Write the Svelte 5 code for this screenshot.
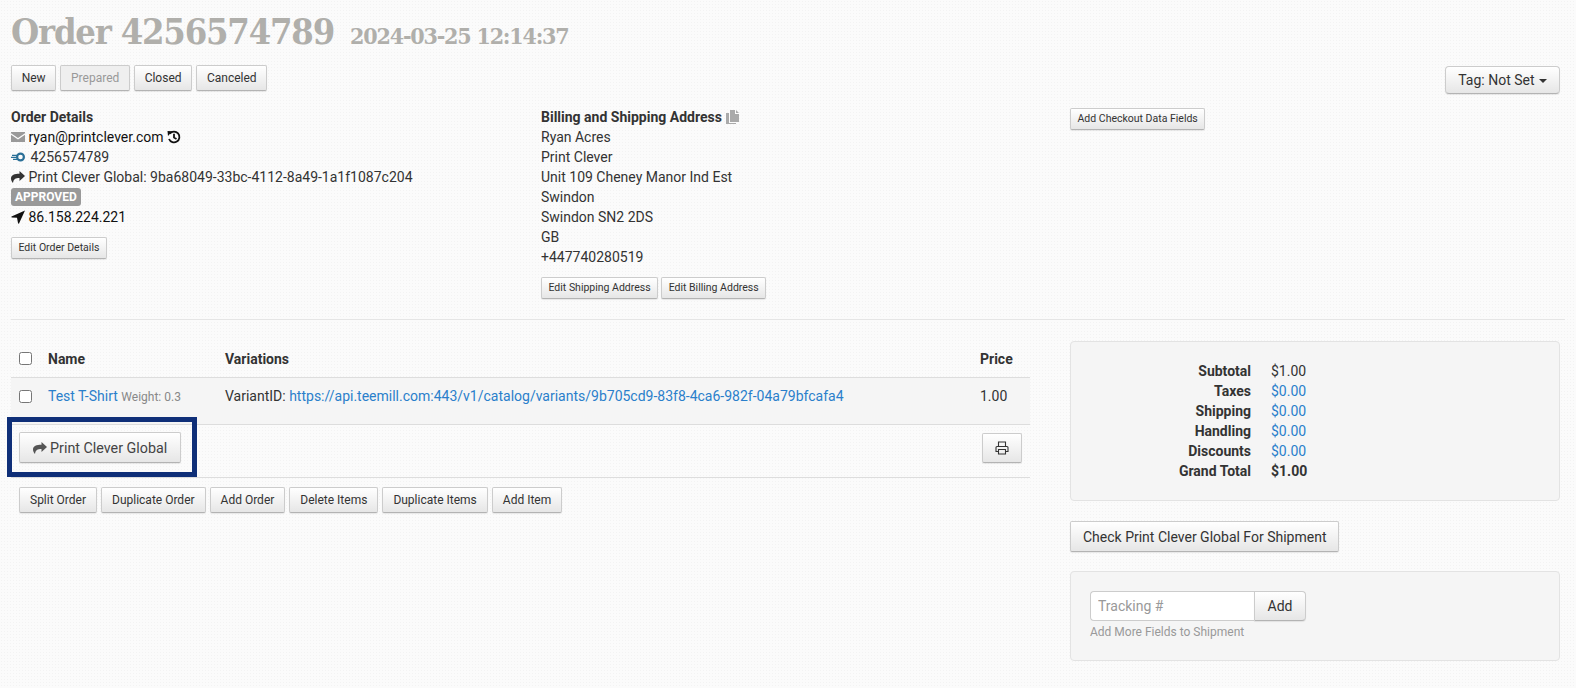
<script>
	let statuses = [
		{ label: 'New' },
		{ label: 'Prepared', disabled: true },
		{ label: 'Closed' },
		{ label: 'Canceled' }
	];
	let addressLines = ['Ryan Acres', 'Print Clever', 'Unit 109 Cheney Manor Ind Est', 'Swindon', 'Swindon SN2 2DS', 'GB', '+447740280519'];
	let actions = ['Split Order', 'Duplicate Order', 'Add Order', 'Delete Items', 'Duplicate Items', 'Add Item'];
	let totals = [
		{ label: 'Subtotal', value: '$1.00' },
		{ label: 'Taxes', value: '$0.00', link: true },
		{ label: 'Shipping', value: '$0.00', link: true },
		{ label: 'Handling', value: '$0.00', link: true },
		{ label: 'Discounts', value: '$0.00', link: true },
		{ label: 'Grand Total', value: '$1.00', bold: true }
	];
</script>

<div class="page">
	<h1>Order 4256574789 <small>2024-03-25 12:14:37</small></h1>

	<div class="toolbar">
		<div class="btns">
			{#each statuses as s}
				<button class="btn status" disabled={s.disabled}>{s.label}</button>
			{/each}
		</div>
		<button class="btn tag">Tag: Not Set <span class="caret"></span></button>
	</div>

	<div class="details">
		<div class="col">
			<strong>Order Details</strong>
			<div class="line">
				<svg class="ic" width="14" height="14" viewBox="0 0 14 14"><path fill="#999" d="M0 2h14v1.200L7 8 0 3.200zM0 4.800l7 4.700 7-4.700V12H0z"/></svg>
				<span class="dark">ryan@printclever.com</span>
				<svg width="14" height="14" viewBox="0 0 14 14" class="hist"><path fill="none" stroke="#111" stroke-width="1.800" d="M2.800 3.600A5.400 5.400 0 1 1 2 9M7 3.800v3.700l2.500 1.500"/><path fill="#111" d="M.5 1l4.800 .3L1 6z"/></svg>
			</div>
			<div class="line">
				<svg class="ic" width="14" height="14" viewBox="0 0 14 14"><circle cx="9.500" cy="7" r="3.400" fill="none" stroke="#2a6f97" stroke-width="2.200"/><path stroke="#2a6f97" stroke-width="1.200" d="M1 5.300h5M0 7.300h6M2 9.300h4"/></svg>
				<span class="gap">4256574789</span>
			</div>
			<div class="line">
				<svg class="ic" width="14" height="14" viewBox="0 0 14 14"><path fill="#333" d="M8.500 1L14 6 8.500 11V8C4.500 8 2.500 9 2 13 .7 11.500 0 10 0 8.500 0 5 3.500 3.800 8.500 3.800z"/></svg>
				Print Clever Global: 9ba68049-33bc-4112-8a49-1a1f1087c204
			</div>
			<div class="line"><span class="badge">APPROVED</span></div>
			<div class="line">
				<svg class="ic" width="14" height="14" viewBox="0 0 14 14"><path fill="#111" d="M14 .5L8 13.500Q7.300 14 7 13L6 7.700 .8 7.500Q0 7 .5 6.500z"/></svg>
				<span class="dark">86.158.224.221</span>
			</div>
			<div class="sub-btns"><button class="btn xs">Edit Order Details</button></div>
		</div>

		<div class="col">
			<strong>Billing and Shipping Address</strong>
			<svg class="copy" width="13" height="14" viewBox="0 0 13 14"><path fill="#aaa" d="M4 0h5v4h4v8H4z"/><path fill="#aaa" d="M10 0l3 3h-3zM0 3h3v10h7v1H0z"/></svg>
			{#each addressLines as line}
				<div class="line">{line}</div>
			{/each}
			<div class="sub-btns">
				<button class="btn xs">Edit Shipping Address</button>
				<button class="btn xs">Edit Billing Address</button>
			</div>
		</div>

		<div class="col">
			<button class="btn xs">Add Checkout Data Fields</button>
		</div>
	</div>

	<hr />

	<div class="main">
		<div class="items">
			<div class="row head">
				<div class="c-check"><input type="checkbox" /></div>
				<div class="c-name">Name</div>
				<div class="c-var">Variations</div>
				<div class="c-price">Price</div>
			</div>
			<div class="row item">
				<div class="c-check"><input type="checkbox" /></div>
				<div class="c-name"><a href="#item">Test T-Shirt</a> <span class="weight">Weight: 0.3</span></div>
				<div class="c-var">VariantID: <a href="#variant">https://api.teemill.com:443/v1/catalog/variants/9b705cd9-83f8-4ca6-982f-04a79bfcafa4</a></div>
				<div class="c-price">1.00</div>
			</div>
			<div class="fulfil">
				<button class="btn lg">
					<svg width="14" height="14" viewBox="0 0 14 14"><path fill="#555" d="M8.500 1L14 6 8.500 11V8C4.500 8 2.500 9 2 13 .7 11.500 0 10 0 8.500 0 5 3.500 3.800 8.500 3.800z"/></svg>
					Print Clever Global
				</button>
				<button class="btn print" aria-label="Print">
					<svg width="14" height="14" viewBox="0 0 14 14"><path fill="none" stroke="#333" stroke-width="1.100" d="M3.500 5.500V1h7v4.500M3.500 10.500H1V6.500q0-1 1-1h10q1 0 1 1v4h-2.500M3.500 8.500h7V13h-7z"/></svg>
				</button>
				<div class="callout"></div>
			</div>
			<div class="actions">
				{#each actions as a}
					<button class="btn sm">{a}</button>
				{/each}
			</div>
		</div>

		<div class="side">
			<div class="well totals">
				{#each totals as t}
					<div class="t-label">{t.label}</div>
					<div class="t-value" class:link={t.link} class:bold={t.bold}>{t.value}</div>
				{/each}
			</div>
			<button class="btn check">Check Print Clever Global For Shipment</button>
			<div class="well tracking">
				<div class="group">
					<input type="text" placeholder="Tracking #" />
					<button class="btn add">Add</button>
				</div>
				<div class="help">Add More Fields to Shipment</div>
			</div>
		</div>
	</div>
</div>

<style>
	:global(body) {
		background-color: #fbfbfb;
		background-image: radial-gradient(#f3f3f3 0.6px, transparent 0.8px);
		background-size: 3px 3px;
		font-family: Roboto, "Liberation Sans", sans-serif;
		font-size: 14px;
		line-height: 20px;
		color: #333;
	}
	.page {
		padding: 0 11px;
		height: 688px;
		box-sizing: border-box;
		overflow: hidden;
	}
	h1 {
		margin: 0;
		padding-top: 8px;
		height: 65px;
		box-sizing: border-box;
		font-family: "DejaVu Serif", serif;
		font-stretch: condensed;
		font-size: 36px;
		line-height: 46px;
		font-weight: 700;
		color: #b0afab;
		letter-spacing: -1.200px;
		white-space: nowrap;
	}
	h1 small {
		font-size: 23px;
		margin-left: 6px;
		letter-spacing: -1.200px;
	}
	.toolbar {
		display: flex;
		justify-content: space-between;
		align-items: flex-start;
		height: 42px;
		padding-right: 5px;
	}
	.btns {
		display: flex;
		gap: 4px;
	}
	.btn {
		font-family: inherit;
		font-size: 13px;
		line-height: 18px;
		color: #333;
		padding: 3px 11px;
		border: 1px solid #ccc;
		border-bottom-color: #b3b3b3;
		border-radius: 2px;
		background: linear-gradient(#fff, #e6e6e6);
		box-shadow: 0 1px 1px rgba(0, 0, 0, 0.08);
		white-space: nowrap;
		box-sizing: border-box;
	}
	.btn:disabled {
		color: #999;
		background: #efefef;
	}
	.status {
		font-size: 12px;
		height: 26px;
		padding: 0 9.700px;
	}
	.tag {
		font-size: 14px;
		padding: 4px 12px;
		margin-top: 1px;
		border-radius: 4px;
	}
	.caret {
		display: inline-block;
		border-top: 4px solid #333;
		border-left: 4px solid transparent;
		border-right: 4px solid transparent;
		vertical-align: middle;
		margin-left: 1px;
	}
	.details {
		display: grid;
		grid-template-columns: 530px 529px 1fr;
		height: 212px;
	}
	.col strong {
		font-weight: 700;
	}
	.line {
		height: 20px;
		white-space: nowrap;
	}
	.ic {
		vertical-align: -2px;
	}
	.dark {
		color: #111;
	}
	.gap {
		margin-left: 2px;
	}
	.hist {
		vertical-align: -2px;
	}
	.copy {
		vertical-align: -2px;
		margin-left: 1px;
	}
	.badge {
		display: inline-block;
		background: #999;
		color: #fff;
		font-size: 12px;
		font-weight: 700;
		line-height: 18px;
		padding: 0 4px;
		border-radius: 3px;
		vertical-align: top;
		margin-top: 1px;
	}
	.sub-btns {
		margin-top: 10px;
		display: flex;
		gap: 3px;
	}
	.xs {
		font-size: 10.500px;
		line-height: 16px;
		padding: 2px 6.500px;
	}
	hr {
		border: 0;
		border-top: 1px solid #e5e5e5;
		margin: 0 0 20px;
	}
	.main {
		display: grid;
		grid-template-columns: 1019px 490px;
		column-gap: 40px;
	}
	.row {
		display: flex;
		align-items: center;
		padding-left: 8px;
	}
	.head {
		height: 38px;
		font-weight: 700;
		border-bottom: 1px solid #ddd;
		box-sizing: border-box;
	}
	.item {
		height: 47px;
		background: #f5f5f5;
		border-bottom: 1px solid #ddd;
		box-sizing: border-box;
	}
	.item > div {
		margin-top: -10px;
	}
	.c-check {
		width: 29px;
		display: flex;
	}
	.c-check input {
		margin: 0;
		width: 13px;
		height: 13px;
	}
	.c-name {
		width: 177px;
	}
	.c-var {
		width: 755px;
		white-space: nowrap;
	}
	.c-price {
		width: 46px;
	}
	a {
		color: #2a7fcb;
		text-decoration: none;
	}
	.weight {
		font-size: 12px;
		color: #888;
	}
	.fulfil {
		position: relative;
		display: flex;
		justify-content: space-between;
		align-items: center;
		height: 53px;
		padding: 0 8px 7px;
		border-bottom: 1px solid #ddd;
		box-sizing: border-box;
	}
	.lg {
		font-size: 14.300px;
		padding: 5px 12.500px;
		height: 31px;
		color: #444;
	}
	.lg svg {
		vertical-align: -2px;
	}
	.print {
		width: 40px;
		height: 30px;
		padding: 0;
	}
	.print svg {
		display: block;
		margin: 0 auto;
	}
	.callout {
		position: absolute;
		left: -4px;
		top: -8px;
		width: 190px;
		height: 60px;
		box-sizing: border-box;
		border: 5px solid #0f2f78;
	}
	.actions {
		display: flex;
		gap: 4px;
		padding: 9px 8px;
	}
	.sm {
		font-size: 12px;
		padding: 2px 10px;
		height: 26px;
	}
	.well {
		background: #f5f5f5;
		border: 1px solid #e3e3e3;
		border-radius: 4px;
		box-sizing: border-box;
	}
	.side {
		display: flex;
		flex-direction: column;
		align-items: flex-start;
		margin-top: 1px;
	}
	.side .well {
		width: 100%;
	}
	.totals {
		display: grid;
		grid-template-columns: 180px 1fr;
		column-gap: 20px;
		height: 160px;
		padding: 19px 0;
		align-content: start;
	}
	.t-label {
		text-align: right;
		font-weight: 700;
	}
	.t-value.link {
		color: #2a7fcb;
	}
	.t-value.bold {
		font-weight: 700;
	}
	.check {
		font-size: 14px;
		height: 31px;
		padding: 4px 12px;
		margin: 20px 0 19px;
	}
	.tracking {
		height: 90px;
		padding: 19px 19px;
	}
	.group {
		display: flex;
	}
	.group input {
		width: 164px;
		height: 30px;
		box-sizing: border-box;
		border: 1px solid #ccc;
		border-right: 0;
		border-radius: 4px 0 0 4px;
		padding: 0 7px;
		font: inherit;
		background: #fff;
	}
	.group input::placeholder {
		color: #999;
	}
	.add {
		font-size: 14px;
		height: 30px;
		width: 52px;
		padding: 0;
		border-radius: 0 4px 4px 0;
	}
	.help {
		font-size: 12px;
		color: #999;
		margin-top: 1px;
	}
</style>
